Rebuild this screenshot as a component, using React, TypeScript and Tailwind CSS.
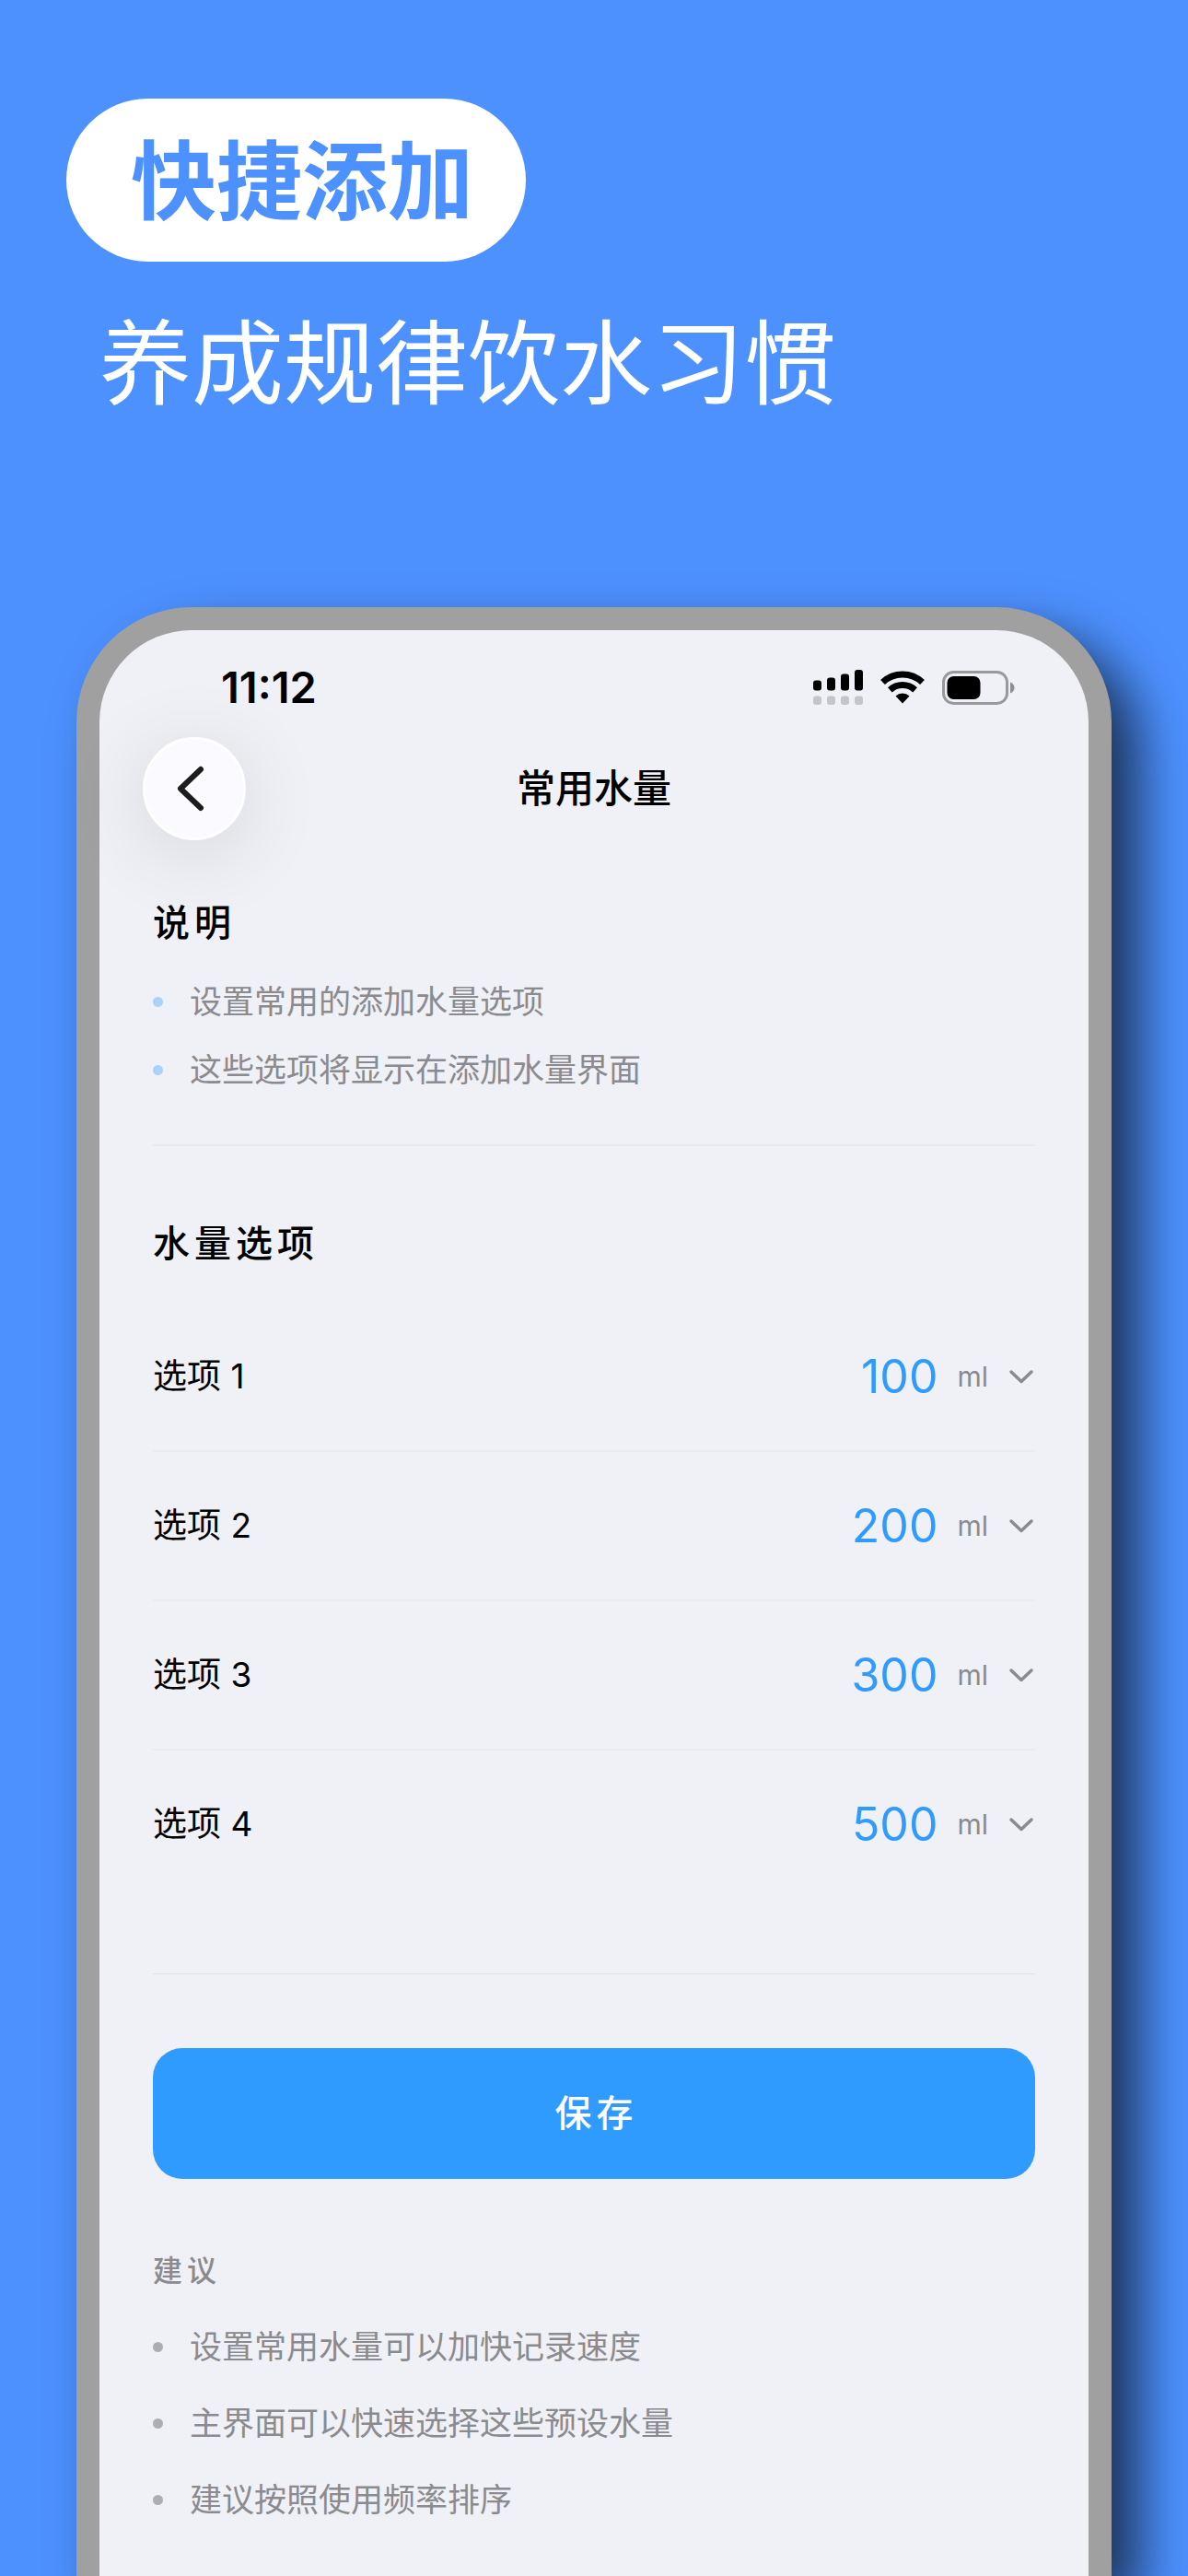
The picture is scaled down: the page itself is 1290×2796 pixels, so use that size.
import { useState } from 'react'

const notes = ['设置常用的添加水量选项', '这些选项将显示在添加水量界面']
const tips = ['设置常用水量可以加快记录速度', '主界面可以快速选择这些预设水量', '建议按照使用频率排序']
const amounts = [50, 100, 150, 200, 250, 300, 400, 500, 600]
const defaults = [100, 200, 300, 500]

function StatusIcons() {
  return (
    <div className="flex items-center gap-[19px]">
      <svg className="w-[54px] h-[38px]" viewBox="0 0 54 38" fill="currentColor">
        <rect x="0" y="11.5" width="9" height="11" rx="3" />
        <rect x="15" y="8.5" width="9" height="14" rx="3" />
        <rect x="30" y="4.5" width="9" height="18" rx="3" />
        <rect x="45" y="0" width="9" height="22.5" rx="3" />
        {[0, 15, 30, 45].map((x) => (
          <rect key={x} x={x} y="28.5" width="9" height="9.5" rx="3" fill="#c4c4c9" />
        ))}
      </svg>
      <svg className="w-[48px] h-[36px]" viewBox="0 0 48 36" fill="none" stroke="currentColor" strokeWidth="7">
        <path d="M2.5 12.5A31.5 31.5 0 0 1 45.5 12.5" />
        <path d="M10.4 20.9A20 20 0 0 1 37.6 20.9" />
        <path d="M16.5 27.5A11 11 0 0 1 31.5 27.5L24 35.5Z" fill="currentColor" stroke="none" />
      </svg>
      <svg className="w-[79px] h-[37px]" viewBox="0 0 79 37">
        <rect x="1.5" y="1.5" width="69" height="34" rx="11" fill="none" stroke="#98989d" strokeWidth="3" />
        <rect x="5.5" y="6" width="36" height="25" rx="7" fill="currentColor" />
        <path d="M74 12.5c6 2 6 10 0 12z" fill="#8e8e93" />
      </svg>
    </div>
  )
}

function BulletList({ items, dot, gap }: { items: string[]; dot: string; gap: string }) {
  return (
    <ul className={`flex flex-col ${gap}`}>
      {items.map((item) => (
        <li key={item} className="flex items-center gap-[29px] text-[35px] leading-[50px] text-[#8a8a8f]">
          <span className={`size-[11px] shrink-0 rounded-full ${dot}`} />
          {item}
        </li>
      ))}
    </ul>
  )
}

export default function App() {
  const [values, setValues] = useState(defaults)

  const update = (index: number, value: number) => {
    setValues((prev) => prev.map((v, i) => (i === index ? value : v)))
  }

  return (
    <main className="min-h-screen flex flex-col overflow-hidden bg-[#4d91ff] font-['Inter','Noto_Sans_CJK_SC',sans-serif]">
      <header className="flex flex-col items-start gap-12 px-[72px] pt-[107px]">
        <p className="rounded-full bg-white pt-7 pr-[57px] pb-6 pl-[70px] text-[93px] leading-[125px] font-bold text-[#4d91ff]">快捷添加</p>
        <h1 className="pl-9 text-[100px] leading-[126px] font-normal text-white">养成规律饮水习惯</h1>
      </header>

      <div className="mx-[83px] mt-[201px] flex-1 rounded-t-[125px] border-[25px] border-b-0 border-[#a0a0a0] bg-[#f0f1f6] pb-14 text-black shadow-[30px_30px_56px_rgba(0,0,0,0.65)]">
        <div className="flex h-14 items-center justify-between mt-[34px] pl-[132px] pr-20">
          <time className="text-[47px] leading-[56px] font-semibold">11:12</time>
          <StatusIcons />
        </div>

        <nav className="mt-[26px] grid grid-cols-[112px_1fr_112px] items-center px-[47px]">
          <button
            type="button"
            aria-label="返回"
            className="flex size-[112px] items-center justify-center rounded-full border-[3px] border-white bg-[#fafaff] text-[#1b1b20] shadow-[0_14px_90px_rgba(0,0,0,0.12)]"
          >
            <svg className="w-[34px] h-[54px] mr-2" viewBox="0 0 34 54" fill="none" stroke="currentColor" strokeWidth="6" strokeLinecap="round" strokeLinejoin="round">
              <path d="M28 6L6 27L28 48" />
            </svg>
          </button>
          <h2 className="text-center text-[42px] leading-[56px] font-medium">常用水量</h2>
        </nav>

        <div className="px-[58px]">
          <section className="mt-[62px] border-b-2 border-[#e9e9ed] pb-14">
            <h3 className="mb-8 text-[40px] leading-[56px] font-medium tracking-[5px]">说明</h3>
            <BulletList items={notes} dot="bg-[#a8d3fb]" gap="gap-6" />
          </section>

          <section className="mt-[78px] border-b border-[#e0e0e5] pb-[82px]">
            <h3 className="mb-9 text-[40px] leading-[56px] font-medium tracking-[5px]">水量选项</h3>
            <div className="divide-y-2 divide-[#ececf0]">
              {values.map((value, i) => (
                <div key={i} className="box-content flex h-40 items-center">
                  <label htmlFor={`amount-${i}`} className="flex-1 text-[37px] leading-[50px]">选项 {i + 1}</label>
                  <select
                    id={`amount-${i}`}
                    value={value}
                    onChange={(e) => update(i, Number(e.target.value))}
                    className="appearance-none [field-sizing:content] text-right text-[50px] leading-[60px] text-[#309bff]"
                  >
                    {amounts.map((a) => (
                      <option key={a} value={a}>{a}</option>
                    ))}
                  </select>
                  <span className="ml-[21px] text-[30px] leading-[50px] text-[#8a8a8f]">ml</span>
                  <svg className="ml-[21px] w-[30px] h-[18px]" viewBox="0 0 30 18" fill="none" stroke="#8a8a8f" strokeWidth="3.5" strokeLinecap="round" strokeLinejoin="round">
                    <path d="M4 4L15 14.5L26 4" />
                  </svg>
                </div>
              ))}
            </div>
          </section>

          <button type="button" className="mt-20 h-[142px] w-full rounded-[32px] bg-[#309bff] pl-[5px] text-[40px] leading-[56px] font-medium tracking-[5px] text-white">保存</button>

          <section className="mt-[75px]">
            <h4 className="mb-8 text-[32px] leading-[50px] font-medium tracking-[5px] text-[#8a8a8f]">建议</h4>
            <BulletList items={tips} dot="bg-[#aeaeb2]" gap="gap-[33px]" />
          </section>
        </div>
      </div>
    </main>
  )
}
